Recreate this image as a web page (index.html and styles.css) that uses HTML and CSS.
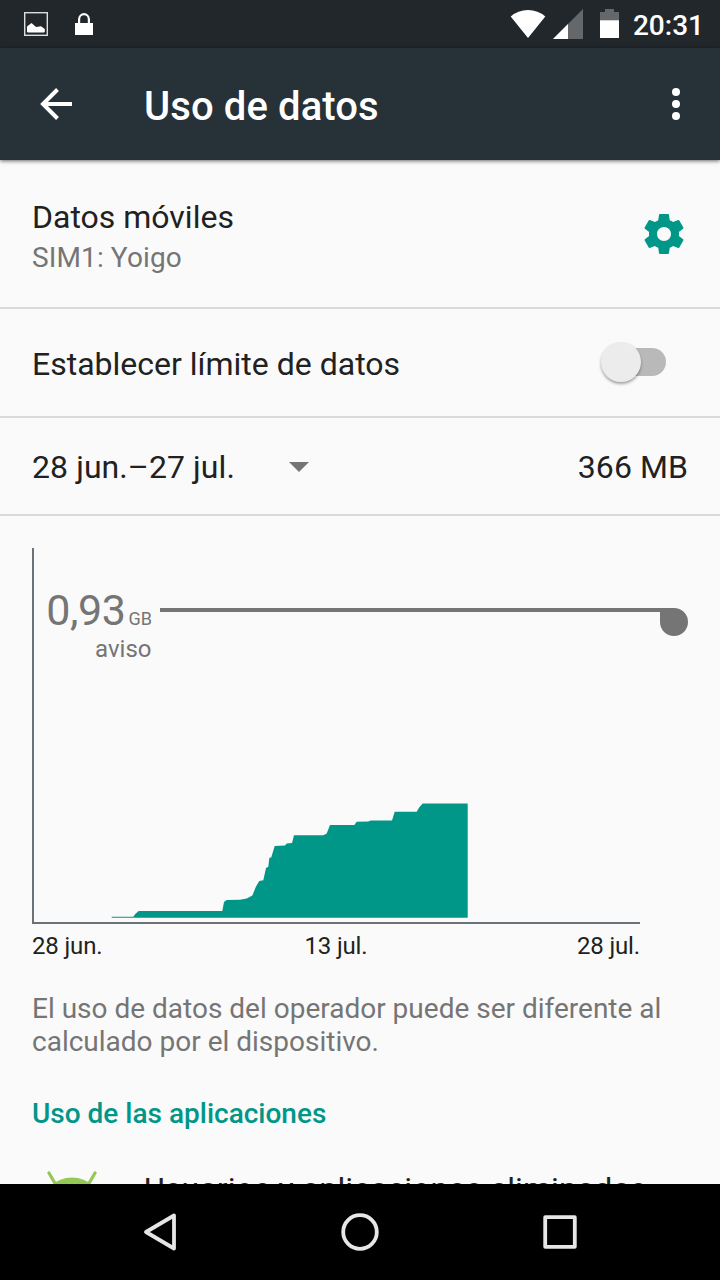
FILE: index.html
```html
<!DOCTYPE html>
<html lang="es">
<head>
    <meta charset="UTF-8">
    <meta name="viewport" content="width=device-width, initial-scale=1.0">
    <title>Uso de datos</title>
    <link rel="stylesheet" href="styles.css">
</head>
<body>
    <div class="screen">
        <div class="status-bar">
            <svg class="status-left" width="72" height="48" viewBox="24 0 72 48">
                <rect x="24.7" y="12.7" width="22.6" height="22.6" fill="none" stroke="#ddd" stroke-width="1.4"/>
                <path d="M27 32V26.500L31.500 23l4.500 4 5-.8 3.800 2.800v3l-1 .5H28z" fill="#fff"/>
                <path d="M75 23h3v-3.500a6 6.500 0 0 1 12 0V23h3v12H75zM80.200 23h7.600v-3.500a3.800 4.200 0 0 0-7.600 0z" fill="#fff"/>
            </svg>
            <svg class="status-right" width="110" height="48" viewBox="510 0 110 48">
                <path d="M528 38 510.700 16.500Q518 10 528 10t17.300 6.500z" fill="#fff"/>
                <path d="M583 9v30h-30z" fill="#64686b"/>
                <path d="M568 24v15h-15z" fill="#fff"/>
                <path d="M600 12h5V9h9v3h5v9h-19z" fill="#64686b"/>
                <path d="M600 20.300h19V38h-19z" fill="#fff"/>
            </svg>
            <span class="clock">20:31</span>
        </div>

        <div class="app-bar">
            <svg class="back" width="32" height="32" viewBox="0 0 32 32">
                <path d="M32 16H3M17.500 1.500 3 16l14.500 14.500" fill="none" stroke="#fff" stroke-width="4"/>
            </svg>
            <h1>Uso de datos</h1>
            <svg class="more" width="8" height="32" viewBox="0 0 8 32" fill="#fff">
                <circle cx="4" cy="4" r="4"/>
                <circle cx="4" cy="16" r="4"/>
                <circle cx="4" cy="28" r="4"/>
            </svg>
        </div>

        <div class="content">
            <div class="row sim">
                <div>
                    <div class="title">Datos móviles</div>
                    <div class="subtitle">SIM1: Yoigo</div>
                </div>
                <svg class="gear" width="48" height="48" viewBox="0 0 24 24" fill="#009688">
                    <path d="M19.430 12.980c.04-.32.07-.64.07-.98s-.03-.66-.07-.98l2.110-1.650c.19-.15.24-.42.12-.64l-2-3.460c-.12-.22-.39-.3-.61-.22l-2.490 1c-.52-.4-1.080-.73-1.690-.98l-.38-2.650C14.460 2.180 14.250 2 14 2h-4c-.25 0-.46.18-.49.42l-.38 2.650c-.61.25-1.170.59-1.690.98l-2.490-1c-.23-.09-.49 0-.61.22l-2 3.460c-.13.22-.07.49.12.64l2.110 1.650c-.04.32-.07.65-.07.98s.03.66.07.98l-2.110 1.650c-.19.15-.24.42-.12.64l2 3.460c.12.22.39.3.61.22l2.490-1c.52.4 1.080.73 1.690.98l.38 2.650c.03.24.24.42.49.42h4c.25 0 .46-.18.49-.42l.38-2.650c.61-.25 1.170-.59 1.690-.98l2.490 1c.23.09.49 0 .61-.22l2-3.460c.12-.22.07-.49-.12-.64l-2.110-1.650zM12 15.500c-1.930 0-3.500-1.570-3.500-3.500s1.570-3.500 3.500-3.500 3.500 1.570 3.500 3.500-1.570 3.500-3.500 3.500z"/>
                </svg>
            </div>

            <div class="row limit">
                <div class="title">Establecer límite de datos</div>
                <div class="switch"><div class="thumb"></div></div>
            </div>

            <div class="row cycle">
                <div class="title">28 jun.–27 jul.</div>
                <div class="arrow"></div>
                <div class="title total">366 MB</div>
            </div>

            <div class="chart">
                <!-- axes, usage area and warning line -->
                <svg width="656" height="376" viewBox="32 548 656 376">
                    <path d="M111.700 917.700v-.9H133.300L135.300 914 138.700 911H222.300L224 902 226.700 900 240 899.700 246.700 898.500 252.300 895.500 256 886.500 259.300 881 263.300 880.300 266 868 268.300 866.700 269.300 858 271.300 857.300 274.700 846 285 845.500 286.700 843.600 292 843 294 835.200H323.300L326.700 833.500 330 825H354.300L356.700 821.700 368.300 821.400 370.700 820.500H392L394.700 811.700H416.700L419.300 807.300 422.700 803.600H467.700V917.700z" fill="#009688"/>
                    <path d="M33 548V923H640" fill="none" stroke="#6c7378" stroke-width="2"/>
                    <path d="M160 608H674a14 14 0 1 1-14 14V612H160z" fill="#757575"/>
                </svg>
                <div class="warning">
                    <div><span class="amount">0,93</span><span class="unit">GB</span></div>
                    <div class="label">aviso</div>
                </div>
            </div>
            <div class="dates">
                <span>28 jun.</span>
                <span>13 jul.</span>
                <span>28 jul.</span>
            </div>

            <p class="note">El uso de datos del operador puede ser diferente al calculado por el dispositivo.</p>
            <h2>Uso de las aplicaciones</h2>

            <div class="app">
                <svg width="52" height="60" viewBox="46 1170 52 60">
                    <path d="M49 1173l7 12M95 1173l-7 12" stroke="#93c855" stroke-width="3.2" stroke-linecap="round"/>
                    <circle cx="72" cy="1207.500" r="30" fill="#93c855"/>
                </svg>
                <div class="title">Usuarios y aplicaciones eliminadas</div>
            </div>
        </div>

        <div class="nav-bar">
            <svg width="40" height="40" viewBox="0 0 40 40">
                <path d="M34 3.500v33L6 20z"/>
            </svg>
            <svg width="40" height="40" viewBox="0 0 40 40">
                <circle cx="20" cy="20" r="16.800"/>
            </svg>
            <svg width="40" height="40" viewBox="0 0 40 40">
                <rect x="5.200" y="5.200" width="29.600" height="29.600"/>
            </svg>
        </div>
    </div>
</body>
</html>
```
FILE: styles.css
```css
*{
    margin: 0;
    padding: 0;
    box-sizing: border-box;
}
body{
    font-family: Roboto, sans-serif;
    color: #212121;
    background-color: #fafafa;
}
svg{
    display: block;
    flex: none;
}
.screen{
    width: 720px;
    height: 1280px;
    display: flex;
    flex-direction: column;
    overflow: hidden;
}
.status-bar{
    height: 48px;
    flex: none;
    display: flex;
    align-items: center;
    padding: 0 16px 0 24px;
    background-color: #22272b;
}
.status-right{
    margin-left: auto;
}
.clock{
    width: 84px;
    text-align: right;
    color: #fff;
    font-size: 28px;
    font-weight: 500;
    line-height: 48px;
    padding-top: 3px;
}
.app-bar{
    height: 112px;
    flex: none;
    display: flex;
    align-items: center;
    padding: 0 40px;
    background-color: #263238;
    box-shadow: 0 1px 4px rgba(0,0,0,0.6);
    position: relative;
    z-index: 1;
}
.app-bar h1{
    margin-left: 72px;
    padding-top: 5px;
    color: #fff;
    font-size: 40px;
    font-weight: 500;
    letter-spacing: 0.1px;
}
.more{
    margin-left: auto;
}
.content{
    flex: 1;
    min-height: 0;
    overflow: hidden;
}
.row{
    display: flex;
    align-items: center;
    padding: 0 32px;
    border-bottom: 2px solid #dadada;
}
.title{
    font-size: 32px;
    line-height: 38px;
    white-space: nowrap;
}
.subtitle{
    font-size: 28px;
    line-height: 33px;
    margin-top: 5px;
    color: #757575;
    letter-spacing: 0.12px;
}
.sim{
    height: 149px;
    padding-top: 4px;
}
.gear{
    margin: -4px 0 0 auto;
}
.limit{
    height: 109px;
    padding-top: 2px;
}
.switch{
    width: 56px;
    height: 28px;
    margin: -4px 22px 0 auto;
    border-radius: 14px;
    background-color: #b9b9b9;
}
.thumb{
    width: 40px;
    height: 40px;
    margin: -6px 0 0 -9px;
    border-radius: 50%;
    background-color: #ececec;
    box-shadow: 0 2px 3px rgba(0,0,0,0.35);
}
.cycle{
    height: 98px;
    padding-top: 2px;
}
.cycle .title{
    letter-spacing: 0.08px;
}
.arrow{
    margin-left: 54px;
    border: 10px solid transparent;
    border-top-color: #757575;
    border-bottom: none;
}
.total{
    margin-left: auto;
}
.chart{
    position: relative;
    margin: 32px 32px 0;
}
.warning{
    position: absolute;
    top: 37px;
    left: 0;
    width: 120px;
    text-align: right;
    color: #757575;
    white-space: nowrap;
}
.amount{
    font-size: 43px;
    line-height: 50px;
    letter-spacing: -0.4px;
}
.unit{
    margin-left: 3px;
    font-size: 18px;
}
.label{
    font-size: 24px;
    line-height: 28px;
    padding-right: 0.5px;
}
.dates{
    display: grid;
    grid-template-columns: 1fr 1fr 1fr;
    width: 608px;
    margin-left: 32px;
    padding-top: 8px;
    font-size: 24px;
    line-height: 28px;
    letter-spacing: -0.15px;
}
.dates span:nth-child(2){
    text-align: center;
}
.dates span:last-child{
    text-align: right;
}
.note{
    margin: 32px 32px 0;
    font-size: 28px;
    line-height: 33px;
    color: #757575;
}
h2{
    margin: 39px 32px 0;
    font-size: 28px;
    line-height: 33px;
    font-weight: 500;
    color: #009688;
}
.app{
    display: flex;
    padding: 40px 46px 0;
}
.app .title{
    margin-left: 46px;
    letter-spacing: 0.1px;
}
.nav-bar{
    height: 96px;
    flex: none;
    display: flex;
    justify-content: space-between;
    align-items: center;
    padding: 0 140px;
    background-color: #000;
    fill: none;
    stroke: #e6e6e6;
    stroke-width: 3.8;
    stroke-linejoin: round;
}
```
